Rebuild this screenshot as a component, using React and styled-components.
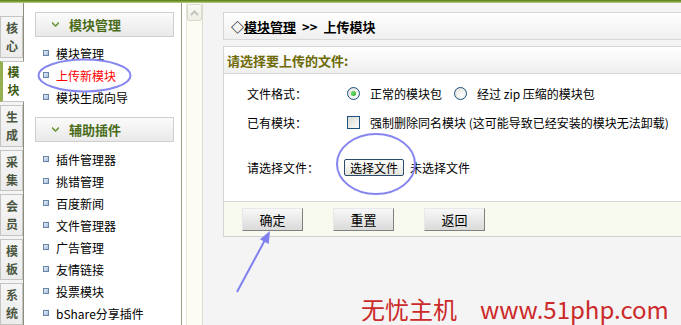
import React from "react";
import styled, { createGlobalStyle } from "styled-components";

const Global = createGlobalStyle`
  html, body {
    margin: 0;
    padding: 0;
    background: #f4f4f4;
  }
  body {
    font-family: "Noto Sans CJK SC", "Liberation Sans", sans-serif;
    font-size: 12px;
    color: #000;
  }
`;

const Page = styled.div`
  position: relative;
  width: 681px;
  height: 325px;
  overflow: hidden;
  display: flex;
  flex-direction: column;
`;

const TopBar = styled.div`
  height: 3px;
  background: linear-gradient(#5a7a18, #88a844 60%, #c4d89c);
`;

const Main = styled.div`
  flex: 1;
  display: flex;
  min-height: 0;
`;

const TabColumn = styled.div`
  width: 23px;
  padding-top: 13px;
  background: #f4f4f4;
  border-right: 1px solid #8e8e80;
  display: flex;
  flex-direction: column;
  gap: 3px;
`;

const Tab = styled.div`
  height: 42px;
  display: flex;
  flex-direction: column;
  align-items: center;
  justify-content: center;
  font-size: 12px;
  font-weight: bold;
  color: ${(p) => (p.$active ? "#3a5a0c" : "#4a5640")};
  background: ${(p) => (p.$active ? "#fff" : "linear-gradient(#f6f6f6, #ececec)")};
  border: 1px solid #c4c4c0;
  border-left: ${(p) => (p.$active ? "3px solid #94b050" : "1px solid #c4c4c0")};
  border-right: ${(p) => (p.$active ? "none" : "1px solid #c4c4c0")};
  margin-right: ${(p) => (p.$active ? "-1px" : "0")};
  padding-left: ${(p) => (p.$active ? "0" : "1px")};
`;

const TabChar = styled.span`
  display: block;
  height: 18px;
  line-height: 18px;
`;

const Sidebar = styled.div`
  width: 139px;
  padding: 9px 7px 0 11px;
  background: #fff;
  border-right: 1px solid #9c9c88;
`;

const GroupHead = styled.div`
  height: 23px;
  display: flex;
  align-items: center;
  gap: 10px;
  padding-left: 16px;
  border: 1px solid #cfcfcf;
  background: linear-gradient(#fbfbfb, #e9e9e9);
  font-size: 13px;
  font-weight: bold;
  color: #4a6c18;
  margin-top: ${(p) => p.$gap || 0}px;
`;

const ItemList = styled.ul`
  list-style: none;
  margin: ${(p) => p.$top || 5}px 0 0;
  padding: 0 0 0 8px;
`;

const Item = styled.li`
  display: flex;
  align-items: center;
  gap: 7px;
  height: 22px;
  font-size: 12px;
  color: ${(p) => (p.$current ? "#f00" : "#000")};

  &::before {
    content: "";
    width: 4px;
    height: 4px;
    border: 1px solid #6a84a8;
    background: linear-gradient(135deg, #e6eefa, #a8bedc);
  }
`;

const ScrollGap = styled.div`
  width: 4px;
  background: #fff;
`;

const ScrollTrack = styled.div`
  width: 15px;
  padding-top: 1px;
  background: #fcfcf4;
  border-left: 1px solid #e6e6d8;
  border-right: 1px solid #dcdcd0;
`;

const ScrollButton = styled.div`
  height: 15px;
  border: 1px solid #dadacc;
  border-radius: 2px;
  background: linear-gradient(#fafaf6, #eeeee6);
  display: flex;
  align-items: center;
  justify-content: center;
`;

const Content = styled.div`
  flex: 1;
  min-width: 0;
  padding: 9px 0 0 20px;
  background: #f4f4f4;
  overflow: hidden;
`;

const Box = styled.div`
  width: calc(100% + 12px);
  border-left: 1px solid #d4d4d4;
  margin-bottom: 6px;
`;

const BoxHead = styled.div`
  height: 26px;
  display: flex;
  align-items: center;
  padding-left: ${(p) => p.$pad || 7}px;
  border-top: 1px solid #d8d8d8;
  border-bottom: 1px solid #d8d8d8;
  background: linear-gradient(#ffffff, #efefef);
  font-size: 13px;
  font-weight: bold;
  color: ${(p) => p.$color || "#000"};

  u {
    text-decoration: underline;
  }
`;

const Crumb = styled.span`
  margin: 0 6px;
`;

const Body = styled.div`
  background: #fff;
  padding: 7px 0 16px 23px;
  display: grid;
  grid-template-columns: 100px 1fr;
  grid-template-rows: 24px 34px 10px 36px;
  align-items: center;
`;

const Label = styled.div`
  font-size: 12px;
  grid-row: ${(p) => p.$row};
`;

const Field = styled.div`
  grid-row: ${(p) => p.$row};
  display: flex;
  align-items: center;
  font-size: 12px;
`;

const Radio = styled.span`
  width: 11px;
  height: 11px;
  border: 1px solid #1c5180;
  border-radius: 50%;
  background: radial-gradient(circle at 60% 65%, #ffffff, #dcdcd4);
  display: inline-flex;
  align-items: center;
  justify-content: center;
  margin-right: 10px;
  margin-left: ${(p) => p.$ml || 0}px;

  &::after {
    content: "";
    width: 5px;
    height: 5px;
    border-radius: 50%;
    background: ${(p) => (p.$checked ? "radial-gradient(circle at 40% 40%, #6ee06e, #21a121)" : "transparent")};
  }
`;

const Check = styled.span`
  width: 11px;
  height: 11px;
  border: 1px solid #1c5180;
  background: linear-gradient(135deg, #dcdcd4, #fafafa);
  margin-right: 10px;
`;

const FileButton = styled.span`
  height: 15px;
  padding: 0 5px;
  margin-left: -3px;
  margin-right: 6px;
  display: inline-flex;
  align-items: center;
  border: 1px solid #2c4a6c;
  border-radius: 2px;
  background: linear-gradient(#ffffff, #e4e4dc);
  font-size: 12px;
`;

const Footer = styled.div`
  height: 34px;
  display: flex;
  align-items: center;
  gap: 30px;
  padding-left: 18px;
  background: #f8f9ef;
  border-top: 1px solid #d6d6d6;
  border-bottom: 1px solid #d0d0d0;
`;

const Button = styled.span`
  width: 59px;
  height: 21px;
  display: flex;
  align-items: center;
  justify-content: center;
  font-size: 13px;
  background: linear-gradient(#f8f8f8, #dadada);
  border-top: 1px solid #e8e8e8;
  border-left: 1px solid #e8e8e8;
  border-right: 1px solid #808080;
  border-bottom: 1px solid #808080;
`;

const Mark = styled.div`
  margin: 58px 0 0 138px;
  font-family: "Noto Sans CJK SC", "Noto Sans", sans-serif;
  font-size: 24px;
  line-height: 28px;
  color: #cc2a2a;
  white-space: nowrap;

  span {
    margin-left: 23px;
  }
`;

const Overlay = styled.svg`
  position: absolute;
  top: 0;
  left: 0;
  pointer-events: none;
`;

const Chevron = () => (
  <svg width="7" height="5" viewBox="0 0 7 5">
    <path d="M0 0.5 L3.5 4 L7 0.5" fill="none" stroke="#6c9a3a" strokeWidth="1.6" />
  </svg>
);

const tabs = [
  ["核", "心"],
  ["模", "块"],
  ["生", "成"],
  ["采", "集"],
  ["会", "员"],
  ["模", "板"],
  ["系", "统"],
];

const plugins = ["插件管理器", "挑错管理", "百度新闻", "文件管理器", "广告管理", "友情链接", "投票模块", "bShare分享插件"];

export default function App() {
  return (
    <Page>
      <Global />
      <TopBar />
      <Main>
        <TabColumn>
          {tabs.map((t, i) => (
            <Tab key={i} $active={i === 1}>
              <TabChar>{t[0]}</TabChar>
              <TabChar>{t[1]}</TabChar>
            </Tab>
          ))}
        </TabColumn>

        <Sidebar>
          <GroupHead>
            <Chevron />
            模块管理
          </GroupHead>
          <ItemList>
            <Item>模块管理</Item>
            <Item $current>上传新模块</Item>
            <Item>模块生成向导</Item>
          </ItemList>
          <GroupHead $gap={9}>
            <Chevron />
            辅助插件
          </GroupHead>
          <ItemList $top={6}>
            {plugins.map((p) => (
              <Item key={p}>{p}</Item>
            ))}
          </ItemList>
        </Sidebar>

        <ScrollGap />
        <ScrollTrack>
          <ScrollButton>
            <svg width="9" height="6" viewBox="0 0 9 6">
              <path d="M1 5 L4.5 1.5 L8 5" fill="none" stroke="#c4c4bc" strokeWidth="2" />
            </svg>
          </ScrollButton>
        </ScrollTrack>

        <Content>
          <Box>
            <BoxHead>
              ◇<u>模块管理</u>
              <Crumb>&gt;&gt;</Crumb>上传模块
            </BoxHead>
          </Box>
          <Box>
            <BoxHead $pad={3} $color="#6e6a05">请选择要上传的文件:</BoxHead>
            <Body>
              <Label $row={1}>文件格式：</Label>
              <Field $row={1}>
                <Radio $checked />
                正常的模块包
                <Radio $ml={12} />
                经过 zip 压缩的模块包
              </Field>
              <Label $row={2}>已有模块：</Label>
              <Field $row={2}>
                <Check />
                强制删除同名模块 (这可能导致已经安装的模块无法卸载)
              </Field>
              <Label $row={4}>请选择文件：</Label>
              <Field $row={4}>
                <FileButton>选择文件</FileButton>
                未选择文件
              </Field>
            </Body>
            <Footer>
              <Button>确定</Button>
              <Button>重置</Button>
              <Button>返回</Button>
            </Footer>
          </Box>
          <Mark>
            无忧主机<span>www.51php.com</span>
          </Mark>
        </Content>
      </Main>

      <Overlay width="681" height="325" viewBox="0 0 681 325">
        <ellipse cx="84.5" cy="75.5" rx="46" ry="16" fill="none" stroke="#8686ee" strokeWidth="2" />
        <ellipse cx="376" cy="164" rx="39" ry="30" fill="none" stroke="#8686ee" strokeWidth="2" />
        <line x1="237" y1="292" x2="265" y2="240" stroke="#8080f0" strokeWidth="2" />
        <polygon points="270,231 268.7,244 259.9,239.2" fill="#8080f0" />
      </Overlay>
    </Page>
  );
}
